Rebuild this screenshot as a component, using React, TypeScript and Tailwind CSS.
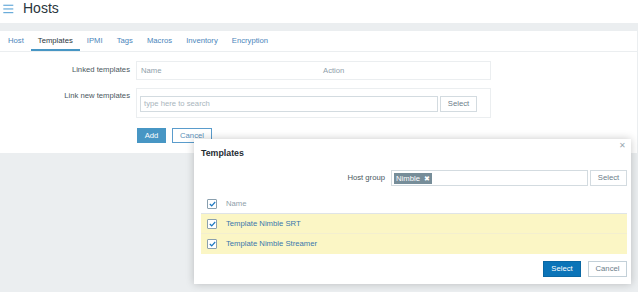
import React from "react";

const Check = () => (
  <span className="w-[10px] h-[10px] border border-[#8aa0ae] bg-white rounded-[1px] flex items-center justify-center shrink-0">
    <svg width="7" height="6" viewBox="0 0 7 6">
      <path d="M0.8 3 L2.7 4.8 L6.2 1" stroke="#1d78c1" strokeWidth="1.2" fill="none" />
    </svg>
  </span>
);

export default function App() {
  const tabs = ["Host", "Templates", "IPMI", "Tags", "Macros", "Inventory", "Encryption"];
  return (
    <div className="w-[638px] h-[292px] bg-[#ebeef0] relative overflow-hidden font-['Liberation_Sans',Arial,sans-serif] text-[#1f2c33]">
      {/* header */}
      <div className="h-[23px] bg-white flex items-start">
        <svg className="ml-[3px] mt-[4px]" width="11" height="10" viewBox="0 0 11 10">
          <rect x="0.3" y="0.7" width="10" height="1.1" fill="#5aa3d6" />
          <rect x="0.3" y="4.4" width="10" height="1.1" fill="#5aa3d6" />
          <rect x="0.3" y="8.1" width="10" height="1.1" fill="#5aa3d6" />
        </svg>
        <span className="ml-[9px] text-[14px] leading-[16px] text-[#2a363d]">Hosts</span>
      </div>
      <div className="h-[8px]" />
      {/* panel */}
      <div className="bg-white h-[122px] mr-[1px]">
        <div className="h-[21px] border-b border-[#ebeef0] flex pl-[1px]">
          {tabs.map((t) => (
            <div
              key={t}
              className={
                "h-[20px] px-[7px] flex items-center text-[7.7px] leading-[10px] " +
                (t === "Templates"
                  ? "text-[#2a363d] shadow-[inset_0_-2px_0_#4796c4]"
                  : "text-[#4b86bb]")
              }
            >
              {t}
            </div>
          ))}
        </div>
        {/* form */}
        <div className="pt-[9px] flex flex-col">
          <div className="flex">
            <div className="w-[130px] text-right pt-[4px] text-[7.7px] leading-[10px] text-[#4a5760]">Linked templates</div>
            <div className="ml-[6px] w-[355px] h-[19px] border border-[#ebeef0] flex items-center text-[7.7px] text-[#8fa0aa]">
              <span className="ml-[4px] w-[182px]">Name</span>
              <span>Action</span>
            </div>
          </div>
          <div className="flex mt-[8px]">
            <div className="w-[130px] text-right pt-[3px] text-[7.7px] leading-[10px] text-[#4a5760]">Link new templates</div>
            <div className="ml-[6px] w-[355px] h-[30px] border border-[#ebeef0] flex items-start pt-[7px] pl-[3px]">
              <div className="w-[298px] h-[16px] border border-[#d3dbe0] flex items-center pl-[3px] text-[7.7px] text-[#a9b5bd]">
                type here to search
              </div>
              <div className="ml-[2px] w-[37px] h-[16px] border border-[#d3dbe0] flex items-center justify-center text-[7.7px] text-[#6a7d89]">
                Select
              </div>
            </div>
          </div>
          <div className="flex mt-[10px] ml-[137px] gap-[6px]">
            <div className="w-[29px] h-[15px] bg-[#4796c4] flex items-center justify-center text-[7.7px] text-white">Add</div>
            <div className="w-[40px] h-[15px] border border-[#5a9ccc] bg-white flex items-center justify-center text-[7.7px] text-[#5a8fb8]">Cancel</div>
          </div>
        </div>
      </div>

      {/* modal */}
      <div className="absolute left-[194px] top-[139px] w-[437px] h-[145px] bg-white shadow-[0_0_8px_rgba(0,0,0,0.22)] pl-[7px] pr-[4px] flex flex-col">
        <div className="flex items-start justify-between">
          <span className="mt-[9px] text-[8.8px] leading-[10px] font-bold text-[#1f2c33]">Templates</span>
          <span className="mt-[3px] mr-[1px] text-[8px] leading-[8px] text-[#9aa7b0]">✕</span>
        </div>
        <div className="flex items-center justify-end mt-[12px] h-[16px]">
          <span className="text-[7.7px] text-[#4a5760] mr-[6px]">Host group</span>
          <div className="w-[197px] h-[16px] border border-[#d3dbe0] flex items-center pl-[2px]">
            <span className="h-[11px] bg-[#768d99] text-white text-[7.7px] leading-[11px] px-[2px] flex items-center gap-[4px]">
              Nimble <span className="text-[7px]">✖</span>
            </span>
          </div>
          <div className="ml-[2px] w-[37px] h-[16px] border border-[#d3dbe0] flex items-center justify-center text-[7.7px] text-[#6a7d89]">
            Select
          </div>
        </div>
        {/* table */}
        <div className="mt-[8px] flex flex-col">
          <div className="h-[20px] flex items-center pl-[6px] border-b border-[#dfe4e7]">
            <Check />
            <span className="ml-[9px] text-[7.7px] text-[#8fa0aa]">Name</span>
          </div>
          <div className="h-[20px] flex items-center pl-[6px] bg-[#fbf6c5] border-b border-[#f3efcf]">
            <Check />
            <span className="ml-[9px] text-[7.7px] text-[#3a76ac]">Template Nimble SRT</span>
          </div>
          <div className="h-[20px] flex items-center pl-[6px] bg-[#fbf6c5]">
            <Check />
            <span className="ml-[9px] text-[7.7px] text-[#3a76ac]">Template Nimble Streamer</span>
          </div>
        </div>
        <div className="flex justify-end mt-[7px] gap-[7px]">
          <div className="w-[38px] h-[16px] bg-[#0b74b8] border border-[#0a67a3] flex items-center justify-center text-[7.7px] text-white">Select</div>
          <div className="w-[39px] h-[16px] border border-[#c3d0d8] flex items-center justify-center text-[7.7px] text-[#6a7d89]">Cancel</div>
        </div>
      </div>
    </div>
  );
}
